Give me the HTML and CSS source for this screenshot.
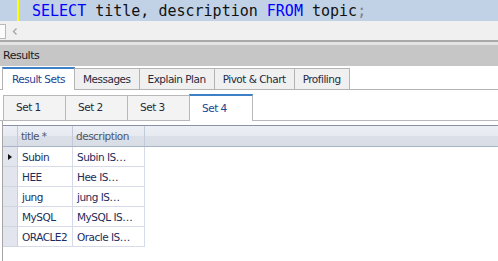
FILE: index.html
```html
<!DOCTYPE html>
<html lang="en">
<head>
    <meta charset="UTF-8">
    <title>Results</title>
    <link rel="stylesheet" href="styles.css">
</head>
<body>
    <div class="editor">
        <div class="caret-bar"></div>
        <div class="code"><span class="kw">SELECT</span> title, description <span class="kw">FROM</span> topic<span class="punct">;</span></div>
    </div>
    <div class="hscroll">
        <div class="scroll-btn"></div>
        <svg class="scroll-arrow" width="6" height="7" viewBox="0 0 6 7">
            <polyline points="4.5,0.5 1.5,3.5 4.5,6.5" fill="none" stroke="#a6a6a6" stroke-width="1.4"/>
        </svg>
    </div>
    <div class="splitter"></div>
    <div class="results-title">Results</div>

    <div class="tabs">
        <div class="tab active">Result Sets</div>
        <div class="tab">Messages</div>
        <div class="tab">Explain Plan</div>
        <div class="tab">Pivot &amp; Chart</div>
        <div class="tab">Profiling</div>
    </div>

    <div class="panel">
        <div class="set-tabs">
            <div class="set-tab">Set 1</div>
            <div class="set-tab">Set 2</div>
            <div class="set-tab">Set 3</div>
            <div class="set-tab active">Set 4</div>
        </div>

        <div class="grid">
            <div class="grid-head">
                <div class="cell row-hd"></div>
                <div class="cell col-title">title *</div>
                <div class="cell col-desc">description</div>
                <div class="head-fill"></div>
            </div>
            <div class="grid-row">
                <div class="cell row-hd"><span class="current"></span></div>
                <div class="cell col-title">Subin</div>
                <div class="cell col-desc">Subin IS…</div>
            </div>
            <div class="grid-row">
                <div class="cell row-hd"></div>
                <div class="cell col-title">HEE</div>
                <div class="cell col-desc">Hee IS…</div>
            </div>
            <div class="grid-row">
                <div class="cell row-hd"></div>
                <div class="cell col-title">jung</div>
                <div class="cell col-desc">jung IS…</div>
            </div>
            <div class="grid-row">
                <div class="cell row-hd"></div>
                <div class="cell col-title">MySQL</div>
                <div class="cell col-desc">MySQL IS…</div>
            </div>
            <div class="grid-row">
                <div class="cell row-hd"></div>
                <div class="cell col-title">ORACLE2</div>
                <div class="cell col-desc">Oracle IS…</div>
            </div>
        </div>
    </div>
</body>
</html>
```

FILE: styles.css
```css
body {
    margin: 0;
    width: 498px;
    height: 261px;
    overflow: hidden;
    font-family: "DejaVu Sans", Verdana, sans-serif;
    font-size: 10.5px;
    letter-spacing: -0.5px;
    color: #1e2538;
    background-color: white;
}

/* editor line */
.editor {
    display: flex;
    height: 21px;
    background-color: #c1d1e6;
}
.caret-bar {
    width: 2px;
    margin-left: 17px;
    background-color: #ffff00;
}
.code {
    margin-left: 13px;
    padding-top: 1px;
    font-family: "DejaVu Sans Mono", "Liberation Mono", monospace;
    font-size: 15px;
    letter-spacing: 0;
    line-height: 20px;
    color: #111;
    white-space: pre;
}
.kw {
    color: #0000ff;
}
.punct {
    color: #808080;
}

/* horizontal scroll bar */
.hscroll {
    display: flex;
    align-items: center;
    height: 19px;
    background-color: #f0f0f0;
}
.scroll-btn {
    width: 5px;
    height: 13px;
    margin-top: 1px;
    background-color: #fbfbfb;
    border: 1px solid #b9b9b9;
    border-left: none;
}
.scroll-arrow {
    margin-left: 6px;
    margin-top: 2px;
}

.splitter {
    height: 3px;
    border-top: 2px solid #a9a9a9;
    background-color: #e4e4e4;
}
.results-title {
    height: 21px;
    padding-left: 3px;
    line-height: 21px;
    font-size: 11px;
    color: #1a1a24;
    background-color: #c6c6c6;
}

/* main tabs */
.tabs {
    display: flex;
    align-items: flex-end;
    height: 23px;
    padding-left: 2px;
    border-bottom: 1px solid #b4b4b4;
}
.tab {
    height: 20px;
    margin-left: -1px;
    padding: 0 8px;
    line-height: 20px;
    background-color: #f0f0f0;
    border: 1px solid #b4b4b4;
    border-bottom: none;
    color: #252b40;
}
.tab:first-child {
    margin-left: 0;
}
.tab.active {
    height: 21px;
    margin-bottom: -1px;
    padding: 0 9px;
    line-height: 21px;
    background-color: white;
    border-top: 2px solid #3d80c6;
    color: #1c4594;
    position: relative;
    z-index: 1;
}

/* result set tabs */
.panel {
    padding-top: 5px;
}
.set-tabs {
    display: flex;
    align-items: flex-end;
    height: 25px;
    padding-left: 3px;
    border-bottom: 1px solid #b8b8b8;
}
.set-tab {
    box-sizing: border-box;
    width: 63px;
    height: 25px;
    margin-left: -1px;
    padding-left: 12px;
    line-height: 23px;
    background-color: #f3f3f3;
    border: 1px solid #b8b8b8;
    border-bottom: none;
    color: #252b40;
}
.set-tab:first-child {
    margin-left: 0;
}
.set-tab.active {
    width: 64px;
    height: 27px;
    margin-bottom: -1px;
    line-height: 25px;
    background-color: white;
    border-top: 2px solid #3d80c6;
    color: #1c4594;
    position: relative;
    z-index: 1;
}

/* grid */
.grid {
    height: 140px;
    margin-left: 2px;
    padding-top: 4px;
    border-left: 1px solid #a6a6a6;
}
.grid-head {
    display: flex;
    height: 20px;
    border-top: 1px solid #8a93a6;
    border-bottom: 1px solid #a9b4c8;
    background: linear-gradient(#eceff4 0, #e7eaf0 50%, #dbdfe8 50%, #d9dde6 100%);
}
.grid-head .cell {
    border-right: 1px solid #c3cad8;
    color: #4f5466;
    line-height: 20px;
}
.head-fill {
    flex: 1;
}
.grid-row {
    display: flex;
    height: 20px;
    line-height: 20px;
}
.grid-row .cell {
    border-right: 1px solid #d6dbe7;
    border-bottom: 1px solid #d6dbe7;
    color: #1c2d5c;
}
.cell {
    box-sizing: border-box;
    padding-left: 3px;
    white-space: nowrap;
    overflow: hidden;
}
.row-hd {
    width: 15px;
    padding-left: 0;
}
.grid-row .row-hd {
    background-color: #e2e5ee;
    border-right-color: #c9cfdc;
    border-bottom-color: #d0d5e1;
}
.col-title {
    width: 55px;
}
.col-desc {
    width: 72px;
}
.grid-row .col-title,
.grid-row .col-desc {
    padding-left: 4px;
}
.current {
    display: block;
    width: 0;
    height: 0;
    margin: 7px 0 0 5px;
    border-top: 3px solid transparent;
    border-bottom: 3px solid transparent;
    border-left: 4px solid #111;
}
```
